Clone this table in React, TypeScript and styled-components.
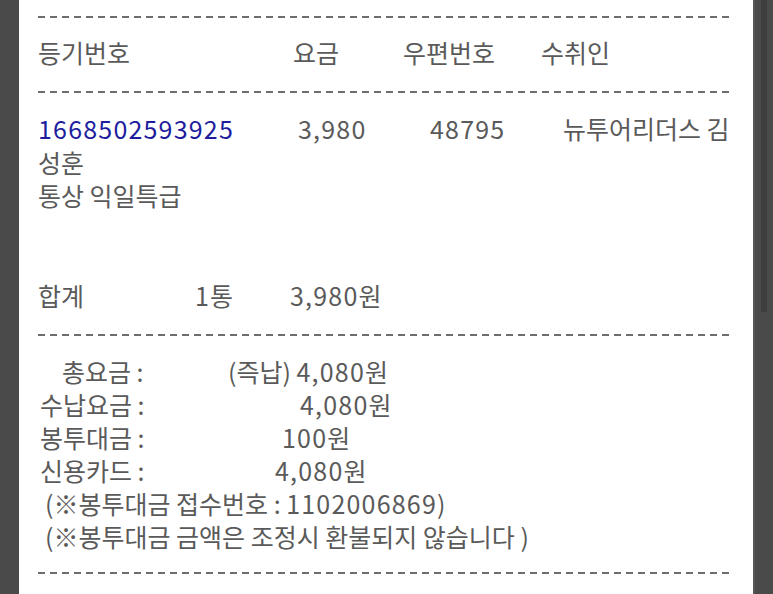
import React from "react";
import styled, { createGlobalStyle } from "styled-components";

const Global = createGlobalStyle`
  html, body { margin: 0; padding: 0; background: #4a4a4a; }
  body { font-family: "Noto Sans CJK KR", "Noto Sans", sans-serif; }
  * { box-sizing: border-box; }
`;

const Screen = styled.div`
  display: flex;
  width: 773px;
  height: 594px;
  overflow: hidden;
  background: #4a4a4a;
`;

const LeftRail = styled.div`
  width: 19px;
  flex: none;
  background: #4a4a4a;
`;

const RightRail = styled.div`
  width: 20px;
  flex: none;
  background: #4a4a4a;
  border-left: 2px solid #575757;
  display: flex;
  justify-content: flex-start;
  padding-left: 6px;
`;

const Thumb = styled.div`
  width: 6px;
  height: 312px;
  background: #3e3e3e;
`;

const Paper = styled.div`
  flex: 1;
  background: #ffffff;
  padding: 16px 20px 0 19px;
  color: #5a5a5a;
  font-size: 25px;
  letter-spacing: 0;
`;

const Dash = styled.div<{ $mt?: number }>`
  height: 2px;
  margin-top: ${(p) => p.$mt ?? 0}px;
  background: repeating-linear-gradient(
    to right,
    #6e6e6e 0 7px,
    transparent 7px 12px
  );
`;

const HeaderRow = styled.div`
  display: grid;
  grid-template-columns: 255px 110px 138px 1fr;
  align-items: center;
  height: 73px;
  padding-bottom: 4px;
  line-height: 1;
`;

const Line = styled.div<{ $cols?: string; $mt?: number; $lh?: number }>`
  display: grid;
  grid-template-columns: ${(p) => p.$cols ?? "1fr"};
  height: ${(p) => p.$lh ?? 33.5}px;
  align-items: center;
  margin-top: ${(p) => p.$mt ?? 0}px;
  white-space: nowrap;
`;

const Cell = styled.span<{ $pad?: number; $num?: boolean; $blue?: boolean }>`
  padding-left: ${(p) => p.$pad ?? 0}px;
  letter-spacing: ${(p) => (p.$num ? "1.2px" : "inherit")};
  color: ${(p) => (p.$blue ? "#1d1d9e" : "inherit")};
`;

const Num = styled.span`
  letter-spacing: 1.2px;
`;

const Block = styled.div<{ $mt: number }>`
  margin-top: ${(p) => p.$mt}px;
`;

export default function App() {
  return (
    <>
      <Global />
      <Screen>
        <LeftRail />
        <Paper>
          <Dash />
          <HeaderRow>
            <Cell>등기번호</Cell>
            <Cell>요금</Cell>
            <Cell>우편번호</Cell>
            <Cell>수취인</Cell>
          </HeaderRow>
          <Dash />
          <Block $mt={17}>
            <Line $cols="260px 132px 133px 1fr">
              <Cell $num $blue>1668502593925</Cell>
              <Cell $num>3,980</Cell>
              <Cell $num>48795</Cell>
              <Cell>뉴투어리더스 김</Cell>
            </Line>
            <Line>
              <Cell>성훈</Cell>
            </Line>
            <Line>
              <Cell>통상 익일특급</Cell>
            </Line>
          </Block>
          <Block $mt={66}>
            <Line $cols="157px 95px 1fr">
              <Cell>합계</Cell>
              <Cell><Num>1</Num>통</Cell>
              <Cell><Num>3,980</Num>원</Cell>
            </Line>
          </Block>
          <Dash $mt={24} />
          <Block $mt={17}>
            <Line $cols="190px 1fr" $lh={33}>
              <Cell $pad={24}>총요금 :</Cell>
              <Cell>(즉납) <Num>4,080</Num>원</Cell>
            </Line>
            <Line $cols="190px 1fr" $lh={33}>
              <Cell $pad={2}>수납요금 :</Cell>
              <Cell $pad={72}><Num>4,080</Num>원</Cell>
            </Line>
            <Line $cols="190px 1fr" $lh={33}>
              <Cell $pad={2}>봉투대금 :</Cell>
              <Cell $pad={54}><Num>100</Num>원</Cell>
            </Line>
            <Line $cols="190px 1fr" $lh={33}>
              <Cell $pad={2}>신용카드 :</Cell>
              <Cell $pad={47}><Num>4,080</Num>원</Cell>
            </Line>
            <Line $lh={33}>
              <Cell $pad={7}>(※봉투대금 접수번호 : <Num>1102006869</Num>)</Cell>
            </Line>
            <Line $lh={33}>
              <Cell $pad={7}>(※봉투대금 금액은 조정시 환불되지 않습니다 )</Cell>
            </Line>
          </Block>
          <Dash $mt={21} />
        </Paper>
        <RightRail>
          <Thumb />
        </RightRail>
      </Screen>
    </>
  );
}
